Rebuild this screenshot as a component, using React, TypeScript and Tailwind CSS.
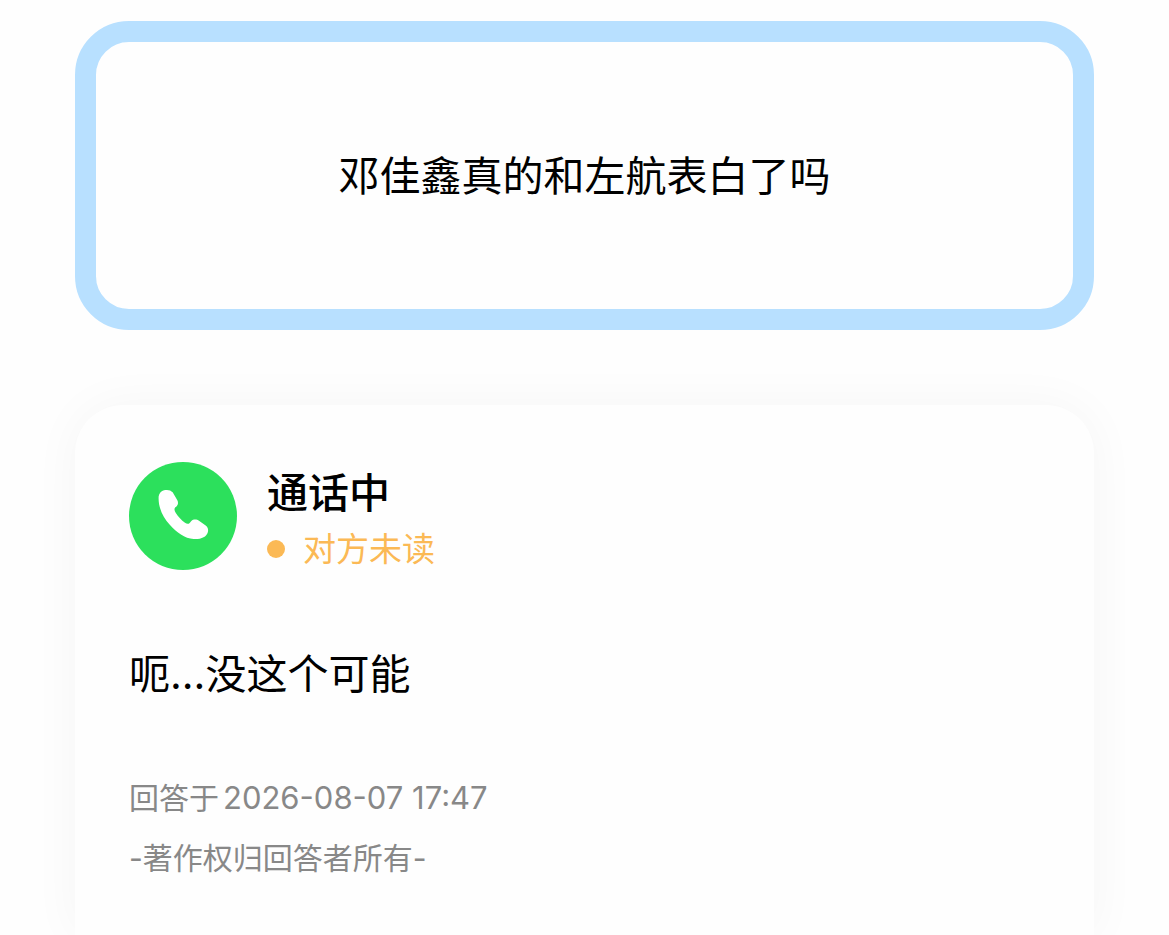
import React from 'react';

const PhoneBadge: React.FC = () => (
  <svg viewBox="0 0 324 324" className="size-[108px] shrink-0" aria-hidden="true">
    <circle cx="162" cy="162" r="162" fill="#2ce05c" />
    <path
      fill="#fff"
      d="M105 85C97 87 91 93 89 103C87 130 98 163 123 189C143 211 167 230 194 231C218 232 232 224 236 212C239 203 237 196 229 190L211 177C202 171 193 172 187 177L182 183C178 187 173 186 168 182C157 174 148 164 140 152C136 146 135 140 139 136C147 130 149 123 145 115L131 91C125 84 115 82 105 85Z"
    />
  </svg>
);

const QuestionCard: React.FC<{ question: string }> = ({ question }) => (
  <section className="flex h-[309px] items-center justify-center rounded-[54px] border-[21px] border-[#b8e0ff]">
    <h1 className="text-[41px] leading-[60px]">{question}</h1>
  </section>
);

const AnswerCard: React.FC = () => (
  <article className="flex-1 rounded-t-[48px] bg-[#fefefe] px-[54px] pt-[57px] shadow-[0_0_50px_rgba(0,0,0,0.04)]">
    <header className="flex h-[108px] items-start gap-[30px]">
      <PhoneBadge />
      <div className="pt-px">
        <h2 className="text-[41px] leading-[60px] font-medium">通话中</h2>
        <p className="flex items-center gap-[18px] text-[33px] leading-[52px] text-[#fbb955]">
          <span className="size-[18px] rounded-full bg-[#fbb955]" />
          对方未读
        </p>
      </div>
    </header>

    <p className="mt-[74px] text-[41px] leading-[60px]">呃...没这个可能</p>

    <footer className="mt-[64px] text-[30px] leading-[60px] text-[#888888]">
      <p className="flex gap-1">
        回答于<time dateTime="2026-08-07T17:47" className="text-[31px]">2026-08-07 17:47</time>
      </p>
      <p>-著作权归回答者所有-</p>
    </footer>
  </article>
);

const App: React.FC = () => {
  return (
    <main className="flex min-h-screen flex-col gap-[75px] overflow-hidden bg-[#fefefe] px-[75px] pt-[21px] font-['Inter','Noto_Sans_CJK_SC',sans-serif] text-black">
      <QuestionCard question="邓佳鑫真的和左航表白了吗" />
      <AnswerCard />
    </main>
  );
};

export default App;
